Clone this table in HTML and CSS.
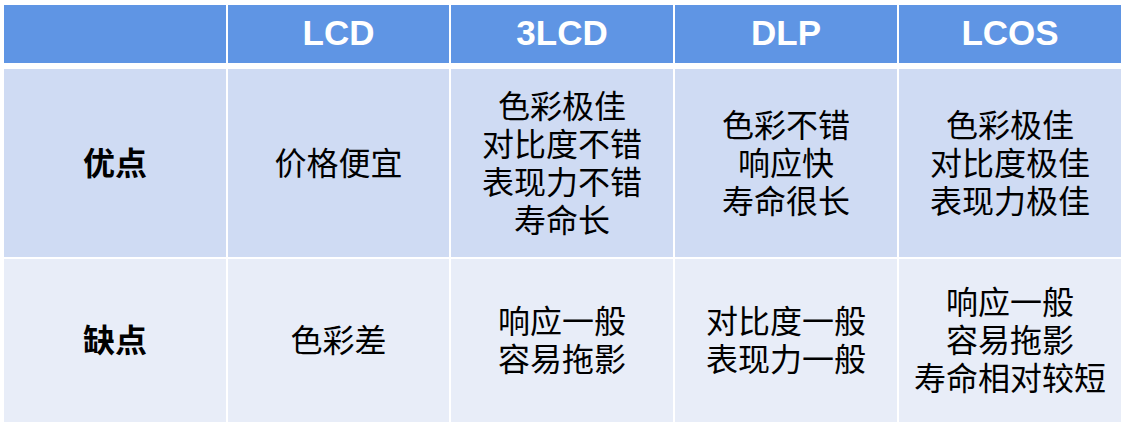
FILE: index.html
```html
<!DOCTYPE html>
<html lang="zh-CN">
<head>
<meta charset="utf-8">
<title>投影技术对比</title>
<link rel="stylesheet" href="styles.css">
</head>
<body>
<div class="page">
  <div class="table">
    <div class="cell head"></div>
    <div class="cell head">LCD</div>
    <div class="cell head">3LCD</div>
    <div class="cell head">DLP</div>
    <div class="cell head">LCOS</div>

    <div class="cell pro label">优点</div>
    <div class="cell pro">价格便宜</div>
    <div class="cell pro">色彩极佳<br>对比度不错<br>表现力不错<br>寿命长</div>
    <div class="cell pro">色彩不错<br>响应快<br>寿命很长</div>
    <div class="cell pro">色彩极佳<br>对比度极佳<br>表现力极佳</div>

    <div class="cell con label">缺点</div>
    <div class="cell con">色彩差</div>
    <div class="cell con">响应一般<br>容易拖影</div>
    <div class="cell con">对比度一般<br>表现力一般</div>
    <div class="cell con">响应一般<br>容易拖影<br>寿命相对较短</div>
  </div>
</div>
</body>
</html>
```

FILE: styles.css
```css
html, body {
  margin: 0;
  padding: 0;
  background: #ffffff;
}

.page {
  padding: 5px 0 0 4px;
}

.table {
  display: grid;
  grid-template-columns: 222px 221px 222px 222px 222px;
  grid-template-rows: 62px 188px 163px;
  column-gap: 2px;
  row-gap: 2px;
  width: 1117px;
}

.cell {
  display: flex;
  align-items: center;
  justify-content: center;
  text-align: center;
  box-sizing: border-box;
  padding-bottom: 5px;
  font-family: "Noto Sans CJK SC", "Liberation Sans", sans-serif;
  font-size: 32px;
  line-height: 38px;
  color: #000000;
}

.head {
  height: 58px;
  align-self: start;
  padding-bottom: 2px;
  background: #5f95e4;
  color: #ffffff;
  font-family: "Liberation Sans", Arial, sans-serif;
  font-weight: bold;
  font-size: 35px;
  line-height: 40px;
}

.pro {
  background: #cfdbf3;
}

.con {
  background: #e8edf8;
}

.label {
  font-weight: bold;
}
```
